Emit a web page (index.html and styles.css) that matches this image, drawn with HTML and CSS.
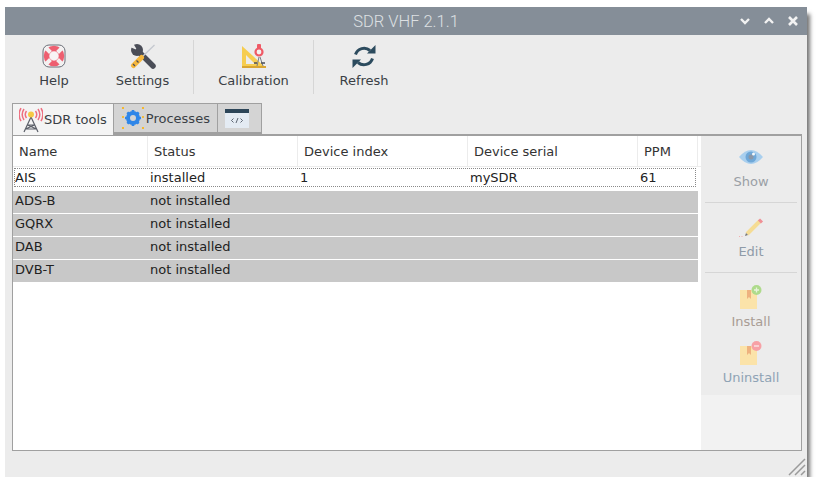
FILE: index.html
```html
<!DOCTYPE html>
<html lang="en">
<head>
    <meta charset="UTF-8">
    <title>SDR VHF 2.1.1</title>
    <link rel="stylesheet" href="styles.css">
</head>
<body>
    <div class="window">
        <div class="titlebar">
            <span class="title">SDR VHF 2.1.1</span>
            <div class="winbtns">
                <svg width="12" height="12" viewBox="0 0 12 12"><path d="M2 4l4 4 4-4" fill="none" stroke="#f2f2f2" stroke-width="2.4"/></svg>
                <svg width="12" height="12" viewBox="0 0 12 12"><path d="M2 8l4-4 4 4" fill="none" stroke="#f2f2f2" stroke-width="2.4"/></svg>
                <svg width="12" height="12" viewBox="0 0 12 12"><path d="M2 2l8 8M10 2l-8 8" fill="none" stroke="#f2f2f2" stroke-width="2.6"/></svg>
            </div>
        </div>

        <div class="toolbar">
            <div class="tool tool-help">
                <svg width="24" height="26" viewBox="0 0 24 26">
                    <rect x="1" y="2" width="22" height="22" rx="6" fill="#f3f3f3" stroke="#6b6f78"/>
                    <circle cx="12" cy="13" r="7.500" fill="#f8f4f4" stroke="#ee5f70" stroke-width="5.500"/>
                    <path d="M4 5l4.500 4.500M20 5l-4.500 4.500M4 21l4.500-4.500M20 21l-4.500-4.500" stroke="#f4f0f0" stroke-width="4"/>
                </svg>
                <span>Help</span>
            </div>
            <div class="tool tool-settings">
                <svg width="26" height="26" viewBox="0 0 26 26">
                    <circle cx="7" cy="7" r="6" fill="#4a4d57"/>
                    <path d="M7 7L3 0H0v4z" fill="#ececec"/>
                    <path d="M8 8l15 15" stroke="#4a4d57" stroke-width="5.500" stroke-linecap="round"/>
                    <path d="M12 14L24.500 2" stroke="#c4c8cf" stroke-width="1.300"/>
                    <path d="M3.500 22.500l8-8" stroke="#f6b73c" stroke-width="5" stroke-linecap="round"/>
                    <path d="M6.500 17.500l2 2M3 21l2 2" stroke="#4a4d57" stroke-width="1.200"/>
                </svg>
                <span>Settings</span>
            </div>
            <div class="tool-sep"></div>
            <div class="tool tool-calib">
                <svg width="26" height="26" viewBox="0 0 26 26">
                    <path d="M1 3v22h24z" fill="#f6cd50"/>
                    <path d="M5 12v9h9z" fill="#ececec"/>
                    <path d="M1 24h24" stroke="#d9a531" stroke-width="2"/>
                    <path d="M18 14l-2 9M19 14l3 9" stroke="#7a7d85" stroke-width="1"/>
                    <rect x="16" y="1" width="4" height="5" rx="1" fill="#ef5a66"/>
                    <circle cx="18" cy="9" r="3.500" fill="#f4f0f0" stroke="#ef5a66" stroke-width="2.200"/>
                    <path d="M13 20h3M20 20h4" stroke="#4a4d57" stroke-width="1.500"/>
                </svg>
                <span>Calibration</span>
            </div>
            <div class="tool-sep"></div>
            <div class="tool tool-refresh">
                <svg width="26" height="26" viewBox="0 0 26 26">
                    <path d="M4.500 11.500A9 9 0 0 1 19 7.500" fill="none" stroke="#2c4b5e" stroke-width="3"/>
                    <path d="M16 10.500h8.500V2z" fill="#2c4b5e"/>
                    <path d="M21.500 15.500A9 9 0 0 1 7 19.500" fill="none" stroke="#2c4b5e" stroke-width="3"/>
                    <path d="M10 16.500H1.500V25z" fill="#2c4b5e"/>
                </svg>
                <span>Refresh</span>
            </div>
        </div>

        <div class="tabs">
            <div class="tab active">
                <svg width="24" height="26" viewBox="0 0 24 26">
                    <path d="M5 2a10 10 0 0 0 0 11M2 1a13 13 0 0 0 0 13M19 2a10 10 0 0 1 0 11M22 1a13 13 0 0 1 0 13M7.500 4a6 6 0 0 0 0 7M16.500 4a6 6 0 0 1 0 7" fill="none" stroke="#ee6f80" stroke-width="1.500"/>
                    <path d="M12 10L5 25M12 10l7 15M8.500 18h7M6.500 22h11M8.500 18l9 4M15.500 18l-9 4" fill="none" stroke="#5b5f68" stroke-width="1.200"/>
                    <circle cx="12" cy="7.500" r="3" fill="#f6c945"/>
                </svg>
                <span>SDR tools</span>
            </div>
            <div class="tab tab-proc">
                <svg width="24" height="24" viewBox="0 0 24 24">
                    <circle cx="12" cy="12" r="5" fill="none" stroke="#2f86e8" stroke-width="4"/>
                    <path d="M12 4v16M4 12h16M6.300 6.300l11.400 11.400M17.700 6.300L6.300 17.700" stroke="#2f86e8" stroke-width="2.600" stroke-dasharray="3 10 3"/>
                    <path d="M1 2h2M21 2h2M1 22h2M21 22h2M2 10v2M22 10v2" stroke="#f5b82e" stroke-width="1.800"/>
                </svg>
                <span>Processes</span>
            </div>
            <div class="tab tab-code">
                <svg width="24" height="19" viewBox="0 0 24 19">
                    <rect width="24" height="19" fill="#e4ebf3"/>
                    <rect width="24" height="4" fill="#2c4558"/>
                    <path d="M8.500 9.500l-2 2 2 2M15.500 9.500l2 2-2 2M13 9l-2 5" fill="none" stroke="#3b4450" stroke-width=".8"/>
                </svg>
            </div>
        </div>

        <div class="pane">
            <div class="table">
                <div class="row head">
                    <div class="cell c1">Name</div>
                    <div class="cell c2">Status</div>
                    <div class="cell c3">Device index</div>
                    <div class="cell c4">Device serial</div>
                    <div class="cell c5">PPM</div>
                </div>
                <div class="row current">
                    <div class="cell c1">AIS</div>
                    <div class="cell c2">installed</div>
                    <div class="cell c3">1</div>
                    <div class="cell c4">mySDR</div>
                    <div class="cell c5">61</div>
                </div>
                <div class="row off">
                    <div class="cell c1">ADS-B</div>
                    <div class="cell c2">not installed</div>
                </div>
                <div class="row off">
                    <div class="cell c1">GQRX</div>
                    <div class="cell c2">not installed</div>
                </div>
                <div class="row off">
                    <div class="cell c1">DAB</div>
                    <div class="cell c2">not installed</div>
                </div>
                <div class="row off">
                    <div class="cell c1">DVB-T</div>
                    <div class="cell c2">not installed</div>
                </div>
            </div>
            <div class="side">
                <div class="side-btns">
                    <div class="sbtn sbtn-show">
                        <svg width="26" height="16" viewBox="0 0 26 16">
                            <path d="M1 8q12-14 24 0q-12 14-24 0z" fill="#a9cfee"/>
                            <circle cx="13" cy="8" r="5.500" fill="#6fa8d8"/>
                            <circle cx="13" cy="8" r="2.500" fill="#8a97a8"/>
                            <circle cx="15.500" cy="5" r="1.500" fill="#f4f8fb"/>
                        </svg>
                        <span>Show</span>
                    </div>
                    <div class="side-sep"></div>
                    <div class="sbtn sbtn-edit">
                        <svg width="26" height="20" viewBox="0 0 26 20">
                            <path d="M22 3L9 16" stroke="#f5dc94" stroke-width="4"/>
                            <path d="M21 1.500l3 3" stroke="#ef8f96" stroke-width="3"/>
                            <path d="M8 15l-1 3 3-1z" fill="#777"/>
                            <path d="M1 18.500h5" stroke="#f0b0b0" stroke-dasharray="1 1.500"/>
                        </svg>
                        <span>Edit</span>
                    </div>
                    <div class="side-sep"></div>
                    <div class="sbtn sbtn-install">
                        <svg width="22" height="24" viewBox="0 0 22 24">
                            <rect x="0" y="5" width="17" height="19" fill="#fbe3a9"/>
                            <path d="M7 5v9l2-2 2 2V5z" fill="#eeb27f"/>
                            <circle cx="16.500" cy="5" r="5" fill="#aedb8c"/>
                            <path d="M14 5h5M16.500 2.500v5" stroke="#e8f4dc" stroke-width="1.300"/>
                        </svg>
                        <span>Install</span>
                    </div>
                    <div class="sbtn sbtn-uninstall">
                        <svg width="22" height="24" viewBox="0 0 22 24">
                            <rect x="0" y="5" width="17" height="19" fill="#fbe3a9"/>
                            <path d="M7 5v9l2-2 2 2V5z" fill="#eeb27f"/>
                            <circle cx="16.500" cy="5" r="5" fill="#f7a1a6"/>
                            <path d="M14 5h5" stroke="#fbeaea" stroke-width="1.300"/>
                        </svg>
                        <span>Uninstall</span>
                    </div>
                </div>
            </div>
        </div>

        <svg class="grip" width="18" height="18" viewBox="0 0 18 18">
            <path d="M1 17L17 1M7 17L17 7M13 17l4-4" stroke="#9a9a9a" stroke-width="1.500"/>
        </svg>
    </div>
</body>
</html>
```

FILE: styles.css
```css
body{
    margin: 0;
    padding: 0;
    background: white;
    font-family: "DejaVu Sans", sans-serif;
    font-size: 13px;
    color: #2f2f2f;
    overflow: hidden;
}
.window{
    width: 802px;
    height: 470px;
    margin: 7px 0 0 5px;
    background-color: #ececec;
    box-shadow: 5px 5px 4px -2px rgba(0,0,0,0.55);
    display: flex;
    flex-direction: column;
    position: relative;
}
.titlebar{
    height: 28px;
    flex: none;
    background-color: #858e98;
    display: flex;
    align-items: center;
    justify-content: center;
    position: relative;
}
.title{
    font-family: Roboto, sans-serif;
    font-weight: 300;
    font-size: 16.5px;
    color: #dde0e3;
}
.winbtns{
    position: absolute;
    right: 8px;
    top: 8px;
    display: flex;
    gap: 12px;
}

/* toolbar */
.toolbar{
    height: 57px;
    padding-top: 5px;
    flex: none;
    display: flex;
}
.tool{
    display: flex;
    flex-direction: column;
    align-items: center;
    padding-top: 3px;
    gap: 4px;
    color: #3a3f45;
}
.tool svg{
    display: block;
}
.tool-help{
    width: 98px;
}
.tool-settings{
    width: 79px;
    margin-right: 11px;
}
.tool-sep{
    width: 1px;
    height: 54px;
    background-color: #d6d6d6;
}
.tool-calib{
    width: 119px;
}
.tool-refresh{
    width: 100px;
}

/* tabs */
.tabs{
    margin-top: 6px;
    padding-left: 7px;
    height: 32px;
    flex: none;
    display: flex;
    position: relative;
    z-index: 1;
}
.tab{
    border: 1px solid #a0a0a0;
    border-bottom-width: 2px;
    background-color: #d4d4d4;
    display: flex;
    align-items: center;
    gap: 1px;
    padding: 0 6px;
    color: #3a3f45;
    margin-right: -1px;
    height: 28px;
}
.tab.active{
    background-color: #f4f4f4;
    border-bottom: 0;
    height: 31px;
}
.tab-proc{
    padding: 0 7px;
}
.tab-code{
    padding: 0 12px 0 7px;
}

/* main pane */
.pane{
    width: 790px;
    height: 317px;
    margin-left: 7px;
    box-sizing: border-box;
    border: 1px solid #a0a0a0;
    border-top-width: 2px;
    margin-top: -1px;
    background-color: white;
    display: flex;
}
.table{
    width: 688px;
    flex: none;
}
.row{
    display: flex;
    box-sizing: border-box;
    height: 22px;
    margin-bottom: 1px;
    width: 685px;
    align-items: center;
    color: #222;
}
.head{
    height: 31px;
    margin-bottom: 0;
    width: 688px;
    border-bottom: 1px solid #ececec;
    color: #333;
}
.current{
    height: 19px;
    margin: 1px 2px 4px 1px;
    width: 682px;
    border: 1px dotted #8a8a8a;
    padding-bottom: 1px;
}
.off{
    background-color: #c8c8c8;
    padding-bottom: 3px;
}
.cell{
    box-sizing: border-box;
    flex: none;
    padding-left: 2px;
    white-space: nowrap;
}
.head .cell{
    height: 100%;
    padding-left: 6px;
    border-right: 1px solid #ececec;
    line-height: 32px;
}
.c1{
    width: 135px;
}
.c2{
    width: 150px;
}
.c3{
    width: 170px;
}
.c4{
    width: 170px;
}
.c5{
    width: 60px;
}
.current .c1{
    width: 133px;
    padding-left: 0;
}

/* side buttons */
.side{
    flex: 1;
    background-color: #f2f2f2;
}
.side-btns{
    height: 259px;
    background-color: #ececec;
    padding: 13px 4px 0;
    box-sizing: border-box;
}
.side-sep{
    height: 1px;
    background-color: #d6d6d6;
}
.sbtn{
    display: flex;
    flex-direction: column;
    align-items: center;
    color: #9a9fa5;
}
.sbtn svg{
    display: block;
}
.sbtn-show{
    height: 53px;
    gap: 9px;
}
.sbtn-edit{
    height: 69px;
    padding-top: 15px;
    box-sizing: border-box;
    gap: 6px;
    color: #8f9ba8;
}
.sbtn-install{
    height: 68px;
    padding-top: 12px;
    box-sizing: border-box;
    gap: 5px;
    color: #a89c94;
}
.sbtn-uninstall{
    gap: 5px;
    color: #8fa3b5;
}

.grip{
    position: absolute;
    right: 1px;
    bottom: 1px;
}
```
